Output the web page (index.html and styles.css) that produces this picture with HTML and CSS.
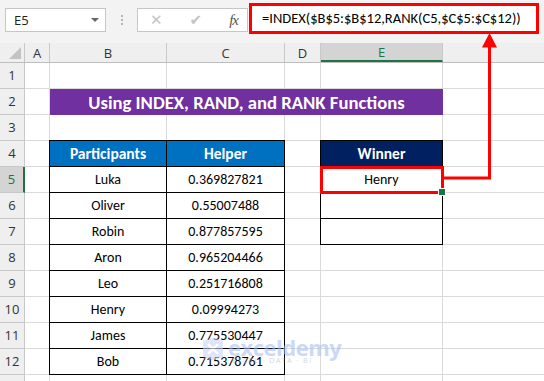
FILE: index.html
```html
<!doctype html>
<html lang="en">
<head>
	<meta charset="UTF-8">
	<title>Using INDEX, RAND, and RANK Functions</title>
	<link rel="stylesheet" href="styles.css">
</head>
<body>
	<div class="toolbar">
		<div class="namebox"><span>E5</span><span class="drop"></span></div>
		<div class="dots"><i></i><i></i><i></i></div>
		<div class="fxbox">
			<span class="btn cancel">&#x2715;</span>
			<span class="btn enter">&#x2714;</span>
			<span class="btn fx">fx</span>
		</div>
		<div class="formula">=INDEX($B$5:$B$12,RANK(C5,$C$5:$C$12))</div>
	</div>

	<div class="colheads">
		<div class="ch corner"><span class="tri"></span></div>
		<div class="ch w-a">A</div>
		<div class="ch w-b">B</div>
		<div class="ch w-c">C</div>
		<div class="ch w-d">D</div>
		<div class="ch w-e on">E</div>
		<div class="ch w-f"></div>
	</div>

	<div class="body">
		<div class="rowheads">
			<div class="rh">1</div>
			<div class="rh">2</div>
			<div class="rh">3</div>
			<div class="rh">4</div>
			<div class="rh on">5</div>
			<div class="rh">6</div>
			<div class="rh">7</div>
			<div class="rh">8</div>
			<div class="rh">9</div>
			<div class="rh">10</div>
			<div class="rh">11</div>
			<div class="rh">12</div>
			<div class="rh"></div>
		</div>
		<div class="cells">
			<div class="title">Using INDEX, RAND, and RANK Functions</div>

			<div class="parts">
				<div class="hd">Participants</div><div class="hd">Helper</div>
				<div>Luka</div><div>0.369827821</div>
				<div>Oliver</div><div>0.55007488</div>
				<div>Robin</div><div>0.877857595</div>
				<div>Aron</div><div>0.965204466</div>
				<div>Leo</div><div>0.251716808</div>
				<div>Henry</div><div>0.09994273</div>
				<div>James</div><div>0.775530447</div>
				<div>Bob</div><div>0.715378761</div>
			</div>

			<div class="winner">
				<div class="hd">Winner</div>
				<div class="sel">Henry</div>
				<div></div>
				<div></div>
			</div>
		</div>
	</div>

	<svg class="arrow" width="544" height="381" viewBox="0 0 544 381">
		<polyline points="444,178 489.5,178 489.5,46" fill="none" stroke="#ff0000" stroke-width="3"/>
		<polygon points="489.5,33 482,47.5 497,47.5" fill="#ff0000"/>
	</svg>

	<div class="mark">
		<svg class="logo" width="24" height="22" viewBox="0 0 24 22">
			<path d="M2 3 L12 0 L22 3 L22 19 L12 22 L2 19 Z" fill="#c9d6f6"/>
			<path d="M7 6 L12 11 L17 6 M7 16 L12 11 L17 16" stroke="#fff" stroke-width="2.4" fill="none"/>
		</svg>
		<div class="brand">
			<span class="name">exceldemy</span>
			<span class="sub">EXCEL · DATA · BI</span>
		</div>
	</div>
</body>
</html>
```

FILE: styles.css
```css
*{box-sizing: border-box;}
body{
	margin: 0;
	position: relative;
	width: 544px;
	height: 381px;
	overflow: hidden;
	background-color: #fff;
	font: 14px "Carlito", "Lato", sans-serif;
	color: #000;
}

/* formula bar */
.toolbar{
	display: flex;
	align-items: flex-start;
	height: 43px;
	padding: 8px 5px 0 5px;
	background-color: #f3f3f3;
}
.namebox{
	display: flex;
	align-items: center;
	justify-content: space-between;
	width: 101px;
	height: 24px;
	padding: 0 6px 0 8px;
	background-color: #fff;
	border: 1px solid #c6c6c6;
	font: 13px "Open Sans", sans-serif;
	color: #222;
}
.namebox .drop{
	width: 0;
	height: 0;
	border-left: 4px solid transparent;
	border-right: 4px solid transparent;
	border-top: 4px solid #666;
}
.dots{
	display: flex;
	flex-direction: column;
	align-items: center;
	gap: 2px;
	width: 31px;
	padding-top: 7px;
}
.dots i{
	width: 2px;
	height: 2px;
	background-color: #b5b5b5;
}
.fxbox{
	display: flex;
	align-items: center;
	justify-content: space-between;
	width: 111px;
	height: 24px;
	padding: 0 9px 0 12px;
	background-color: #fff;
	border: 1px solid #c6c6c6;
}
.fxbox .btn{
	color: #c4c4c4;
	font: 15px "DejaVu Sans", sans-serif;
}
.fxbox .fx{
	color: #555;
	font: italic 15px "Liberation Serif", serif;
	letter-spacing: -1px;
}
.formula{
	flex: 1;
	height: 31px;
	margin: -5px 0 0 1px;
	padding-left: 10px;
	background-color: #fff;
	border: 3px solid #ff0000;
	line-height: 24px;
	font-size: 14.5px;
	white-space: nowrap;
	overflow: hidden;
}

/* headers */
.colheads{
	display: flex;
	height: 20px;
	background-color: #efefef;
	border-bottom: 1px solid #bdbdbd;
	font: 13px "Open Sans", sans-serif;
	color: #333;
}
.ch{
	display: flex;
	align-items: center;
	justify-content: center;
	border-right: 1px solid #c8c8c8;
}
.corner{width: 25px;position: relative;}
.corner .tri{
	position: absolute;
	right: 3px;
	bottom: 3px;
	width: 0;
	height: 0;
	border-left: 12px solid transparent;
	border-bottom: 12px solid #c3c3c3;
}
.w-a{width: 25px;}
.w-b{width: 117px;}
.w-c{width: 118px;}
.w-d{width: 36px;}
.w-e{width: 122px;}
.w-f{flex: 1;border-right: 0;}
.ch.on{
	background-color: #d4d4d4;
	color: #217346;
	border-bottom: 2px solid #217346;
}

.body{display: flex;}
.rowheads{
	width: 25px;
	background-color: #efefef;
	font: 13px "Open Sans", sans-serif;
	color: #333;
}
.rh{
	height: 26px;
	line-height: 25px;
	text-align: center;
	border-right: 1px solid #c8c8c8;
	border-bottom: 1px solid #c8c8c8;
}
.rh.on{
	background-color: #d4d4d4;
	color: #217346;
	border-right: 2px solid #217346;
}

/* sheet cells */
.cells{
	flex: 1;
	display: grid;
	grid-template-columns: 25px 117px 118px 36px 122px 1fr;
	grid-template-rows: repeat(12, 26px) 1fr;
	background-image:
		linear-gradient(to right, transparent 24px, #dadada 24px 25px, transparent 25px 141px, #dadada 141px 142px, transparent 142px 259px, #dadada 259px 260px, transparent 260px 295px, #dadada 295px 296px, transparent 296px 417px, #dadada 417px 418px, transparent 418px),
		repeating-linear-gradient(to bottom, transparent 0 25px, #dadada 25px 26px);
}
.title{
	grid-column: 2 / 6;
	grid-row: 2;
	display: flex;
	align-items: center;
	justify-content: center;
	background-color: #7030a0;
	color: #fff;
	font-weight: bold;
	font-size: 18.7px;
}
.parts, .winner{
	display: grid;
	grid-auto-rows: 26px;
	margin: -1px 0 0 -1px;
	border-left: 1px solid #000;
	border-top: 1px solid #000;
	background-color: #fff;
}
.parts{
	grid-column: 2 / 4;
	grid-row: 4 / 13;
	grid-template-columns: 117px 118px;
}
.winner{
	grid-column: 5;
	grid-row: 4 / 8;
	grid-template-columns: 122px;
}
.parts div, .winner div{
	display: flex;
	align-items: center;
	justify-content: center;
	border-right: 1px solid #000;
	border-bottom: 1px solid #000;
}
.parts .hd, .winner .hd{
	color: #fff;
	font-weight: bold;
	font-size: 15.5px;
}
.parts .hd{background-color: #0070c0;}
.winner .hd{background-color: #002060;}
.winner .sel{
	position: relative;
	outline: 3px solid #ff0000;
	outline-offset: -2px;
}
.winner .sel:after{
	content: "";
	position: absolute;
	right: -4px;
	bottom: -4px;
	width: 6px;
	height: 6px;
	background-color: #217346;
	border: 1px solid #fff;
}

/* callout arrow */
.arrow{
	position: absolute;
	top: 0;
	left: 0;
	pointer-events: none;
}

/* watermark */
.mark{
	position: absolute;
	left: 201px;
	top: 338px;
	display: flex;
	align-items: flex-start;
	gap: 3px;
	opacity: 0.6;
}
.brand{
	display: flex;
	flex-direction: column;
}
.brand .name{
	height: 19px;
	font: bold 22px/19px "Open Sans", sans-serif;
	color: #a9bff3;
	letter-spacing: -0.5px;
}
.brand .sub{
	height: 8px;
	margin: 0 0 0 4px;
	font: 7px/8px "Open Sans", sans-serif;
	color: #b7bcc8;
	letter-spacing: 1.5px;
}
```
